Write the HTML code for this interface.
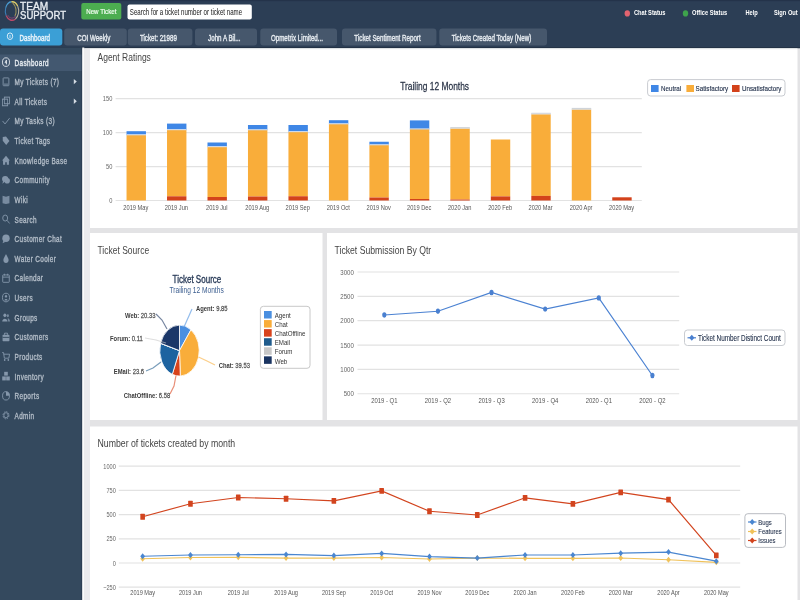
<!DOCTYPE html>
<html><head><meta charset="utf-8"><style>
*{margin:0;padding:0}
html,body{width:800px;height:600px;overflow:hidden;background:#e3e3e5}
svg{display:block;font-family:"Liberation Sans",sans-serif;filter:blur(0.3px)}
</style></head><body>
<svg width="800" height="600" viewBox="0 0 800 600">
<rect x="0.00" y="0.00" width="800.00" height="600.00" fill="#e3e3e5" rx="0"/>
<rect x="0.00" y="0.00" width="800.00" height="48.30" fill="#2c3e55" rx="0"/>
<line x1="0.00" y1="47.60" x2="800.00" y2="47.60" stroke="#233246" stroke-width="1.2"/>
<rect x="0.00" y="0.00" width="800.00" height="1.20" fill="#24334a" rx="0"/>
<g transform="translate(12,11) scale(0.72,1)">
<path d="M-8.05,4.65 A9.3,9.3 0 0 1 -8.74,-3.18" stroke="#3d7fb8" stroke-width="1.5" fill="none"/>
<path d="M-8.74,-3.18 A9.3,9.3 0 0 1 -0.81,-9.26" stroke="#4a9ad0" stroke-width="1.5" fill="none"/>
<path d="M-0.81,-9.26 A9.3,9.3 0 0 1 8.05,-4.65" stroke="#e0cf6a" stroke-width="1.5" fill="none"/>
<path d="M8.05,-4.65 A9.3,9.3 0 0 1 4.65,8.05" stroke="#b8b0a0" stroke-width="1.5" fill="none"/>
<path d="M4.65,8.05 A9.3,9.3 0 0 1 -8.05,4.65" stroke="#c04a6a" stroke-width="1.5" fill="none"/>
<path d="M1,-8 C6,-5 7,1 4,5" stroke="#d8c060" stroke-width="1.4" fill="none" opacity="0.7"/>
<path d="M-6,4 C-3,8 2,8 5,5" stroke="#9a4a80" stroke-width="1.2" fill="none" opacity="0.6"/>
</g>
<text transform="translate(20.00,9.60) scale(0.92,1)" font-size="11" fill="#e9eef3" font-weight="normal" text-anchor="start" stroke="#e9eef3" stroke-width="0.35">TEAM</text>
<text transform="translate(20.00,18.90) scale(0.87,1)" font-size="11" fill="#e9eef3" font-weight="normal" text-anchor="start" stroke="#e9eef3" stroke-width="0.35">SUPPORT</text>
<rect x="81.30" y="3.00" width="40.00" height="16.50" fill="#4cad50" rx="2"/>
<text transform="translate(101.30,13.80) scale(0.78,1)" font-size="7.9" fill="#f4fff4" font-weight="normal" text-anchor="middle" stroke="#f4fff4" stroke-width="0.2">New Ticket</text>
<rect x="127.50" y="4.50" width="124.30" height="15.00" fill="#ffffff" rx="2"/>
<text transform="translate(129.80,15.30) scale(0.715,1)" font-size="8.6" fill="#151515" font-weight="normal" text-anchor="start">Search for a ticket number or ticket name</text>
<ellipse cx="627.3" cy="13.4" rx="2.7" ry="3.1" fill="#e2636f"/>
<text transform="translate(633.90,15.20) scale(0.78,1)" font-size="7.3" fill="#ffffff" font-weight="bold" text-anchor="start">Chat Status</text>
<ellipse cx="685.5" cy="13.4" rx="2.7" ry="3.1" fill="#3ea34c"/>
<text transform="translate(692.00,15.20) scale(0.78,1)" font-size="7.3" fill="#ffffff" font-weight="bold" text-anchor="start">Office Status</text>
<text transform="translate(745.40,15.20) scale(0.78,1)" font-size="7.3" fill="#ffffff" font-weight="bold" text-anchor="start">Help</text>
<text transform="translate(774.00,15.20) scale(0.78,1)" font-size="7.3" fill="#ffffff" font-weight="bold" text-anchor="start">Sign Out</text>
<rect x="0.00" y="28.40" width="62.30" height="17.10" fill="#3b9fd6" rx="3"/>
<ellipse cx="10" cy="36.2" rx="2.7" ry="3.3" fill="none" stroke="#e8f3fb" stroke-width="0.9"/>
<path d="M10,35 L10,38" stroke="#e8f3fb" stroke-width="0.8"/>
<text transform="translate(19.60,40.70) scale(0.69,1)" font-size="9" fill="#eaf4fb" font-weight="normal" text-anchor="start" stroke="#eaf4fb" stroke-width="0.4">Dashboard</text>
<rect x="64.20" y="28.40" width="62.60" height="17.10" fill="#46576c" rx="3"/>
<text transform="translate(93.80,40.70) scale(0.69,1)" font-size="9" fill="#e6ebf0" font-weight="normal" text-anchor="middle" stroke="#e6ebf0" stroke-width="0.4">COI Weekly</text>
<rect x="127.80" y="28.40" width="64.60" height="17.10" fill="#46576c" rx="3"/>
<text transform="translate(158.40,40.70) scale(0.69,1)" font-size="9" fill="#e6ebf0" font-weight="normal" text-anchor="middle" stroke="#e6ebf0" stroke-width="0.4">Ticket: 21989</text>
<rect x="195.00" y="28.40" width="62.00" height="17.10" fill="#46576c" rx="3"/>
<text transform="translate(224.30,40.70) scale(0.69,1)" font-size="9" fill="#e6ebf0" font-weight="normal" text-anchor="middle" stroke="#e6ebf0" stroke-width="0.4">John A Bil...</text>
<rect x="260.30" y="28.40" width="76.70" height="17.10" fill="#46576c" rx="3"/>
<text transform="translate(296.95,40.70) scale(0.69,1)" font-size="9" fill="#e6ebf0" font-weight="normal" text-anchor="middle" stroke="#e6ebf0" stroke-width="0.4">Opmetrix Limited...</text>
<rect x="342.00" y="28.40" width="94.40" height="17.10" fill="#46576c" rx="3"/>
<text transform="translate(387.50,40.70) scale(0.69,1)" font-size="9" fill="#e6ebf0" font-weight="normal" text-anchor="middle" stroke="#e6ebf0" stroke-width="0.4">Ticket Sentiment Report</text>
<rect x="439.30" y="28.40" width="107.70" height="17.10" fill="#46576c" rx="3"/>
<text transform="translate(491.45,40.70) scale(0.69,1)" font-size="9" fill="#e6ebf0" font-weight="normal" text-anchor="middle" stroke="#e6ebf0" stroke-width="0.4">Tickets Created Today (New)</text>
<rect x="0.00" y="47.50" width="82.30" height="552.50" fill="#34495e" rx="0"/>
<line x1="81.80" y1="47.50" x2="81.80" y2="600.00" stroke="#2b3d50" stroke-width="1"/>
<rect x="82.30" y="47.50" width="2.00" height="552.50" fill="#fbfbfb" rx="0"/>
<rect x="84.30" y="48.30" width="5.70" height="551.70" fill="#ebebed" rx="0"/>
<rect x="0.00" y="54.50" width="81.50" height="16.50" fill="#435870" rx="0"/>
<text transform="translate(14.60,65.60) scale(0.78,1)" font-size="8.2" fill="#e8edf2" font-weight="normal" text-anchor="start" letter-spacing="0.45" stroke="#e8edf2" stroke-width="0.35">Dashboard</text>
<g transform="translate(1.9,57.10) scale(0.82,1.0)" fill="#dfe5eb" stroke="#dfe5eb">
<circle cx="5" cy="5" r="4.3" fill="none" stroke-width="1" stroke-width="1.1"/><path d="M5.6,2.8 L3.8,5.6 L6,5.6 M5.6,3 L5.6,7.3" fill="none" stroke-width="1" stroke-width="0.8"/>
</g>
<text transform="translate(14.60,85.22) scale(0.78,1)" font-size="8.2" fill="#b2bcc7" font-weight="normal" text-anchor="start" letter-spacing="0.45" stroke="#b2bcc7" stroke-width="0.35">My Tickets (7)</text>
<g transform="translate(1.9,76.72) scale(0.82,1.0)" fill="#8597ab" stroke="#8597ab">
<rect x="1.5" y="1.2" width="7" height="7.8" rx="0.6" fill="none" stroke-width="1"/><path d="M2.5,7.4 L7.5,7.4" fill="none" stroke-width="1" stroke-width="0.7"/>
</g>
<path d="M73.8,78.92 L76.8,81.62 L73.8,84.32 Z" fill="#d5dce4"/>
<text transform="translate(14.60,104.84) scale(0.78,1)" font-size="8.2" fill="#b2bcc7" font-weight="normal" text-anchor="start" letter-spacing="0.45" stroke="#b2bcc7" stroke-width="0.35">All Tickets</text>
<g transform="translate(1.9,96.34) scale(0.82,1.0)" fill="#8597ab" stroke="#8597ab">
<rect x="3" y="0.8" width="6.2" height="6.6" fill="none" stroke-width="1"/><rect x="0.8" y="2.8" width="6.2" height="6.6" fill="none" stroke-width="1"/>
</g>
<path d="M73.8,98.54 L76.8,101.24 L73.8,103.94 Z" fill="#d5dce4"/>
<text transform="translate(14.60,124.46) scale(0.78,1)" font-size="8.2" fill="#b2bcc7" font-weight="normal" text-anchor="start" letter-spacing="0.45" stroke="#b2bcc7" stroke-width="0.35">My Tasks (3)</text>
<g transform="translate(1.9,115.96) scale(0.82,1.0)" fill="#8597ab" stroke="#8597ab">
<path d="M0.8,5 L3.8,8 L9.4,2.2" fill="none" stroke-width="1" stroke-width="1.9"/>
</g>
<text transform="translate(14.60,144.08) scale(0.78,1)" font-size="8.2" fill="#b2bcc7" font-weight="normal" text-anchor="start" letter-spacing="0.45" stroke="#b2bcc7" stroke-width="0.35">Ticket Tags</text>
<g transform="translate(1.9,135.58) scale(0.82,1.0)" fill="#8597ab" stroke="#8597ab">
<path d="M1,1.5 L5,1 L9.2,5.4 L5.2,9.4 L1,5.2 Z" stroke="none"/>
</g>
<text transform="translate(14.60,163.70) scale(0.78,1)" font-size="8.2" fill="#b2bcc7" font-weight="normal" text-anchor="start" letter-spacing="0.45" stroke="#b2bcc7" stroke-width="0.35">Knowledge Base</text>
<g transform="translate(1.9,155.20) scale(0.82,1.0)" fill="#8597ab" stroke="#8597ab">
<path d="M5,0.5 L9.8,5.2 L8.6,5.2 L8.6,9.6 L6,9.6 L6,7 L4,7 L4,9.6 L1.4,9.6 L1.4,5.2 L0.2,5.2 Z" stroke="none"/>
</g>
<text transform="translate(14.60,183.32) scale(0.78,1)" font-size="8.2" fill="#b2bcc7" font-weight="normal" text-anchor="start" letter-spacing="0.45" stroke="#b2bcc7" stroke-width="0.35">Community</text>
<g transform="translate(1.9,174.82) scale(0.82,1.0)" fill="#8597ab" stroke="#8597ab">
<ellipse cx="4" cy="4.3" rx="3.8" ry="3" stroke="none"/><ellipse cx="6.4" cy="6" rx="3.4" ry="2.8" stroke="none"/><path d="M1.5,6 L0.6,9 L3.6,7" stroke="none"/>
</g>
<text transform="translate(14.60,202.94) scale(0.78,1)" font-size="8.2" fill="#b2bcc7" font-weight="normal" text-anchor="start" letter-spacing="0.45" stroke="#b2bcc7" stroke-width="0.35">Wiki</text>
<g transform="translate(1.9,194.44) scale(0.82,1.0)" fill="#8597ab" stroke="#8597ab">
<path d="M0.8,1.2 L5,2.2 L9.2,1.2 L9.2,8.8 L5,9.6 L0.8,8.8 Z" stroke="none" opacity="0.85"/>
</g>
<text transform="translate(14.60,222.56) scale(0.78,1)" font-size="8.2" fill="#b2bcc7" font-weight="normal" text-anchor="start" letter-spacing="0.45" stroke="#b2bcc7" stroke-width="0.35">Search</text>
<g transform="translate(1.9,214.06) scale(0.82,1.0)" fill="#8597ab" stroke="#8597ab">
<circle cx="4" cy="4" r="3" fill="none" stroke-width="1" stroke-width="1.1"/><path d="M6.2,6.2 L9.4,9.4" fill="none" stroke-width="1" stroke-width="1.4"/>
</g>
<text transform="translate(14.60,242.18) scale(0.78,1)" font-size="8.2" fill="#b2bcc7" font-weight="normal" text-anchor="start" letter-spacing="0.45" stroke="#b2bcc7" stroke-width="0.35">Customer Chat</text>
<g transform="translate(1.9,233.68) scale(0.82,1.0)" fill="#8597ab" stroke="#8597ab">
<ellipse cx="5" cy="4.6" rx="4.5" ry="3.8" stroke="none"/><path d="M1.8,7 L0.8,9.6 L4.5,8" stroke="none"/>
</g>
<text transform="translate(14.60,261.80) scale(0.78,1)" font-size="8.2" fill="#b2bcc7" font-weight="normal" text-anchor="start" letter-spacing="0.45" stroke="#b2bcc7" stroke-width="0.35">Water Cooler</text>
<g transform="translate(1.9,253.30) scale(0.82,1.0)" fill="#8597ab" stroke="#8597ab">
<path d="M5,0.6 C6.5,3.2 8.2,5 8.2,6.8 C8.2,8.6 6.8,9.8 5,9.8 C3.2,9.8 1.8,8.6 1.8,6.8 C1.8,5 3.5,3.2 5,0.6 Z" stroke="none"/>
</g>
<text transform="translate(14.60,281.42) scale(0.78,1)" font-size="8.2" fill="#b2bcc7" font-weight="normal" text-anchor="start" letter-spacing="0.45" stroke="#b2bcc7" stroke-width="0.35">Calendar</text>
<g transform="translate(1.9,272.92) scale(0.82,1.0)" fill="#8597ab" stroke="#8597ab">
<rect x="1" y="2" width="8" height="7.4" rx="0.6" fill="none" stroke-width="1"/><path d="M1,4.2 L9,4.2 M3,0.8 L3,2.6 M7,0.8 L7,2.6" fill="none" stroke-width="1" stroke-width="0.9"/>
</g>
<text transform="translate(14.60,301.04) scale(0.78,1)" font-size="8.2" fill="#b2bcc7" font-weight="normal" text-anchor="start" letter-spacing="0.45" stroke="#b2bcc7" stroke-width="0.35">Users</text>
<g transform="translate(1.9,292.54) scale(0.82,1.0)" fill="#8597ab" stroke="#8597ab">
<circle cx="5" cy="5" r="4.3" fill="none" stroke-width="1" stroke-width="1.1"/><circle cx="5" cy="3.8" r="1.3" stroke="none"/><path d="M2.8,8 C3,5.8 7,5.8 7.2,8 Z" stroke="none"/>
</g>
<text transform="translate(14.60,320.66) scale(0.78,1)" font-size="8.2" fill="#b2bcc7" font-weight="normal" text-anchor="start" letter-spacing="0.45" stroke="#b2bcc7" stroke-width="0.35">Groups</text>
<g transform="translate(1.9,312.16) scale(0.82,1.0)" fill="#8597ab" stroke="#8597ab">
<circle cx="3.6" cy="3.2" r="1.8" stroke="none"/><path d="M0.4,9.4 C0.6,5.8 6.6,5.8 6.8,9.4 Z" stroke="none"/><circle cx="7.2" cy="3.6" r="1.4" stroke="none" opacity="0.8"/><path d="M7,6 C8.6,6 9.8,7.4 9.8,9.4 L7.6,9.4" stroke="none" opacity="0.8"/>
</g>
<text transform="translate(14.60,340.28) scale(0.78,1)" font-size="8.2" fill="#b2bcc7" font-weight="normal" text-anchor="start" letter-spacing="0.45" stroke="#b2bcc7" stroke-width="0.35">Customers</text>
<g transform="translate(1.9,331.78) scale(0.82,1.0)" fill="#8597ab" stroke="#8597ab">
<rect x="0.8" y="3" width="8.4" height="6.4" rx="0.8" stroke="none"/><path d="M3.2,3 L3.2,1.4 L6.8,1.4 L6.8,3" fill="none" stroke-width="1" stroke-width="1"/><path d="M0.8,5.6 L9.2,5.6" fill="none" stroke-width="1" stroke="#34495e" stroke-width="0.6"/>
</g>
<text transform="translate(14.60,359.90) scale(0.78,1)" font-size="8.2" fill="#b2bcc7" font-weight="normal" text-anchor="start" letter-spacing="0.45" stroke="#b2bcc7" stroke-width="0.35">Products</text>
<g transform="translate(1.9,351.40) scale(0.82,1.0)" fill="#8597ab" stroke="#8597ab">
<path d="M0.3,1.2 L2,1.2 L3,6.8 L8.4,6.8 L9.4,2.8 L2.4,2.8" fill="none" stroke-width="1" stroke-width="1.1"/><circle cx="3.4" cy="8.6" r="1" stroke="none"/><circle cx="7.8" cy="8.6" r="1" stroke="none"/>
</g>
<text transform="translate(14.60,379.52) scale(0.78,1)" font-size="8.2" fill="#b2bcc7" font-weight="normal" text-anchor="start" letter-spacing="0.45" stroke="#b2bcc7" stroke-width="0.35">Inventory</text>
<g transform="translate(1.9,371.02) scale(0.82,1.0)" fill="#8597ab" stroke="#8597ab">
<rect x="2.8" y="0.8" width="4.4" height="3.8" stroke="none"/><rect x="0.4" y="5.4" width="4.4" height="4" stroke="none"/><rect x="5.2" y="5.4" width="4.4" height="4" stroke="none"/>
</g>
<text transform="translate(14.60,399.14) scale(0.78,1)" font-size="8.2" fill="#b2bcc7" font-weight="normal" text-anchor="start" letter-spacing="0.45" stroke="#b2bcc7" stroke-width="0.35">Reports</text>
<g transform="translate(1.9,390.64) scale(0.82,1.0)" fill="#8597ab" stroke="#8597ab">
<circle cx="5" cy="5.2" r="4.2" fill="none" stroke-width="1" stroke-width="1.1"/><path d="M5,5.2 L5,1 A4.2,4.2 0 0 1 9.2,5.2 Z" stroke="none"/>
</g>
<text transform="translate(14.60,418.76) scale(0.78,1)" font-size="8.2" fill="#b2bcc7" font-weight="normal" text-anchor="start" letter-spacing="0.45" stroke="#b2bcc7" stroke-width="0.35">Admin</text>
<g transform="translate(1.9,410.26) scale(0.82,1.0)" fill="#8597ab" stroke="#8597ab">
<circle cx="5" cy="5" r="3.6" fill="none" stroke-width="1" stroke-width="2.4" stroke-dasharray="1.7,1.1"/><circle cx="5" cy="5" r="2.6" fill="none" stroke-width="1" stroke-width="1.2"/>
</g>
<rect x="90.00" y="48.30" width="707.50" height="179.70" fill="#ffffff" rx="0"/>
<rect x="84.00" y="48.30" width="716.00" height="1.00" fill="#dfe4e8" rx="0" opacity="0.6"/>
<rect x="90.00" y="233.00" width="232.50" height="187.00" fill="#ffffff" rx="0"/>
<rect x="327.00" y="233.00" width="470.50" height="187.00" fill="#ffffff" rx="0"/>
<rect x="90.00" y="426.50" width="707.50" height="173.50" fill="#ffffff" rx="0"/>
<text transform="translate(97.50,60.50) scale(0.78,1)" font-size="10.9" fill="#454545" font-weight="normal" text-anchor="start">Agent Ratings</text>
<text transform="translate(97.50,253.50) scale(0.78,1)" font-size="10.9" fill="#454545" font-weight="normal" text-anchor="start">Ticket Source</text>
<text transform="translate(334.50,253.50) scale(0.78,1)" font-size="11.1" fill="#454545" font-weight="normal" text-anchor="start">Ticket Submission By Qtr</text>
<text transform="translate(97.50,446.50) scale(0.78,1)" font-size="11.2" fill="#454545" font-weight="normal" text-anchor="start">Number of tickets created by month</text>
<line x1="115.60" y1="200.50" x2="641.80" y2="200.50" stroke="#e2e2e2" stroke-width="1.2"/>
<text transform="translate(112.30,203.10) scale(0.78,1)" font-size="7.3" fill="#666666" font-weight="normal" text-anchor="end">0</text>
<line x1="115.60" y1="166.57" x2="641.80" y2="166.57" stroke="#e2e2e2" stroke-width="1.2"/>
<text transform="translate(112.30,169.17) scale(0.78,1)" font-size="7.3" fill="#666666" font-weight="normal" text-anchor="end">50</text>
<line x1="115.60" y1="132.63" x2="641.80" y2="132.63" stroke="#e2e2e2" stroke-width="1.2"/>
<text transform="translate(112.30,135.23) scale(0.78,1)" font-size="7.3" fill="#666666" font-weight="normal" text-anchor="end">100</text>
<line x1="115.60" y1="98.70" x2="641.80" y2="98.70" stroke="#e2e2e2" stroke-width="1.2"/>
<text transform="translate(112.30,101.30) scale(0.78,1)" font-size="7.3" fill="#666666" font-weight="normal" text-anchor="end">150</text>
<text transform="translate(434.60,89.50) scale(0.78,1)" font-size="10.8" fill="#2a3447" font-weight="normal" text-anchor="middle" stroke="#2a3447" stroke-width="0.25">Trailing 12 Months</text>
<rect x="647.60" y="79.60" width="137.40" height="16.40" fill="#ffffff" rx="3" stroke="#c9ccd1" stroke-width="1"/>
<rect x="651.00" y="85.00" width="7.60" height="7.00" fill="#3f87e6" rx="0"/>
<text transform="translate(661.00,91.00) scale(0.78,1)" font-size="8" fill="#26344e" font-weight="normal" text-anchor="start" stroke="#26344e" stroke-width="0.15">Neutral</text>
<rect x="686.40" y="85.00" width="7.60" height="7.00" fill="#f9ad3a" rx="0"/>
<text transform="translate(695.60,91.00) scale(0.78,1)" font-size="8" fill="#26344e" font-weight="normal" text-anchor="start" stroke="#26344e" stroke-width="0.15">Satisfactory</text>
<rect x="732.00" y="85.00" width="7.60" height="7.00" fill="#d3421b" rx="0"/>
<text transform="translate(742.00,91.00) scale(0.78,1)" font-size="8" fill="#26344e" font-weight="normal" text-anchor="start" stroke="#26344e" stroke-width="0.15">Unsatisfactory</text>
<rect x="126.54" y="131.20" width="19.40" height="4.10" fill="#3f87e6" rx="0"/>
<rect x="126.54" y="134.20" width="19.40" height="1.10" fill="#dfe3e8" rx="0"/>
<rect x="126.54" y="135.30" width="19.40" height="65.20" fill="#f9ad3a" rx="0"/>
<text transform="translate(135.84,210.30) scale(0.78,1)" font-size="7.3" fill="#555555" font-weight="normal" text-anchor="middle">2019 May</text>
<rect x="167.02" y="123.60" width="19.40" height="6.60" fill="#3f87e6" rx="0"/>
<rect x="167.02" y="129.10" width="19.40" height="1.10" fill="#dfe3e8" rx="0"/>
<rect x="167.02" y="130.20" width="19.40" height="66.10" fill="#f9ad3a" rx="0"/>
<rect x="167.02" y="196.30" width="19.40" height="4.20" fill="#d3421b" rx="0"/>
<text transform="translate(176.32,210.30) scale(0.78,1)" font-size="7.3" fill="#555555" font-weight="normal" text-anchor="middle">2019 Jun</text>
<rect x="207.49" y="142.50" width="19.40" height="4.70" fill="#3f87e6" rx="0"/>
<rect x="207.49" y="146.10" width="19.40" height="1.10" fill="#dfe3e8" rx="0"/>
<rect x="207.49" y="147.20" width="19.40" height="49.80" fill="#f9ad3a" rx="0"/>
<rect x="207.49" y="197.00" width="19.40" height="3.50" fill="#d3421b" rx="0"/>
<text transform="translate(216.79,210.30) scale(0.78,1)" font-size="7.3" fill="#555555" font-weight="normal" text-anchor="middle">2019 Jul</text>
<rect x="247.97" y="125.00" width="19.40" height="5.30" fill="#3f87e6" rx="0"/>
<rect x="247.97" y="129.20" width="19.40" height="1.10" fill="#dfe3e8" rx="0"/>
<rect x="247.97" y="130.30" width="19.40" height="66.20" fill="#f9ad3a" rx="0"/>
<rect x="247.97" y="196.50" width="19.40" height="4.00" fill="#d3421b" rx="0"/>
<text transform="translate(257.27,210.30) scale(0.78,1)" font-size="7.3" fill="#555555" font-weight="normal" text-anchor="middle">2019 Aug</text>
<rect x="288.45" y="125.00" width="19.40" height="7.20" fill="#3f87e6" rx="0"/>
<rect x="288.45" y="131.10" width="19.40" height="1.10" fill="#dfe3e8" rx="0"/>
<rect x="288.45" y="132.20" width="19.40" height="64.05" fill="#f9ad3a" rx="0"/>
<rect x="288.45" y="196.25" width="19.40" height="4.25" fill="#d3421b" rx="0"/>
<text transform="translate(297.75,210.30) scale(0.78,1)" font-size="7.3" fill="#555555" font-weight="normal" text-anchor="middle">2019 Sep</text>
<rect x="328.92" y="120.20" width="19.40" height="4.10" fill="#3f87e6" rx="0"/>
<rect x="328.92" y="123.20" width="19.40" height="1.10" fill="#dfe3e8" rx="0"/>
<rect x="328.92" y="124.30" width="19.40" height="76.20" fill="#f9ad3a" rx="0"/>
<text transform="translate(338.22,210.30) scale(0.78,1)" font-size="7.3" fill="#555555" font-weight="normal" text-anchor="middle">2019 Oct</text>
<rect x="369.40" y="141.75" width="19.40" height="3.55" fill="#3f87e6" rx="0"/>
<rect x="369.40" y="144.20" width="19.40" height="1.10" fill="#dfe3e8" rx="0"/>
<rect x="369.40" y="145.30" width="19.40" height="52.20" fill="#f9ad3a" rx="0"/>
<rect x="369.40" y="197.50" width="19.40" height="3.00" fill="#d3421b" rx="0"/>
<text transform="translate(378.70,210.30) scale(0.78,1)" font-size="7.3" fill="#555555" font-weight="normal" text-anchor="middle">2019 Nov</text>
<rect x="409.88" y="120.40" width="19.40" height="9.10" fill="#3f87e6" rx="0"/>
<rect x="409.88" y="128.40" width="19.40" height="1.10" fill="#dfe3e8" rx="0"/>
<rect x="409.88" y="129.50" width="19.40" height="69.50" fill="#f9ad3a" rx="0"/>
<rect x="409.88" y="199.00" width="19.40" height="1.50" fill="#d3421b" rx="0"/>
<text transform="translate(419.18,210.30) scale(0.78,1)" font-size="7.3" fill="#555555" font-weight="normal" text-anchor="middle">2019 Dec</text>
<rect x="450.35" y="127.10" width="19.40" height="1.70" fill="#c9cdd3" rx="0"/>
<rect x="450.35" y="127.70" width="19.40" height="1.10" fill="#dfe3e8" rx="0"/>
<rect x="450.35" y="128.80" width="19.40" height="70.70" fill="#f9ad3a" rx="0"/>
<rect x="450.35" y="199.50" width="19.40" height="1.00" fill="#d3421b" rx="0"/>
<text transform="translate(459.65,210.30) scale(0.78,1)" font-size="7.3" fill="#555555" font-weight="normal" text-anchor="middle">2020 Jan</text>
<rect x="490.83" y="139.50" width="19.40" height="56.90" fill="#f9ad3a" rx="0"/>
<rect x="490.83" y="196.40" width="19.40" height="4.10" fill="#d3421b" rx="0"/>
<text transform="translate(500.13,210.30) scale(0.78,1)" font-size="7.3" fill="#555555" font-weight="normal" text-anchor="middle">2020 Feb</text>
<rect x="531.31" y="112.80" width="19.40" height="1.70" fill="#c9cdd3" rx="0"/>
<rect x="531.31" y="113.40" width="19.40" height="1.10" fill="#dfe3e8" rx="0"/>
<rect x="531.31" y="114.50" width="19.40" height="81.40" fill="#f9ad3a" rx="0"/>
<rect x="531.31" y="195.90" width="19.40" height="4.60" fill="#d3421b" rx="0"/>
<text transform="translate(540.61,210.30) scale(0.78,1)" font-size="7.3" fill="#555555" font-weight="normal" text-anchor="middle">2020 Mar</text>
<rect x="571.78" y="107.90" width="19.40" height="1.90" fill="#c9cdd3" rx="0"/>
<rect x="571.78" y="108.70" width="19.40" height="1.10" fill="#dfe3e8" rx="0"/>
<rect x="571.78" y="109.80" width="19.40" height="90.70" fill="#f9ad3a" rx="0"/>
<text transform="translate(581.08,210.30) scale(0.78,1)" font-size="7.3" fill="#555555" font-weight="normal" text-anchor="middle">2020 Apr</text>
<rect x="612.26" y="197.30" width="19.40" height="3.20" fill="#d3421b" rx="0"/>
<text transform="translate(621.56,210.30) scale(0.78,1)" font-size="7.3" fill="#555555" font-weight="normal" text-anchor="middle">2020 May</text>
<text transform="translate(196.90,282.60) scale(0.78,1)" font-size="10.3" fill="#2b3d5a" font-weight="normal" text-anchor="middle" stroke="#2b3d5a" stroke-width="0.35">Ticket Source</text>
<text transform="translate(196.60,292.80) scale(0.78,1)" font-size="8.5" fill="#3d5f90" font-weight="normal" text-anchor="middle">Trailing 12 Months</text>
<path d="M179.5,350.6 L179.50,325.10 A19.7,25.5 0 0 1 190.93,329.83 Z" fill="#4a8fe0" stroke="#ffffff" stroke-width="0.8" stroke-linejoin="round"/>
<path d="M179.5,350.6 L190.93,329.83 A19.7,25.5 0 0 1 180.27,376.08 Z" fill="#f9ad3a" stroke="#ffffff" stroke-width="0.8" stroke-linejoin="round"/>
<path d="M179.5,350.6 L180.27,376.08 A19.7,25.5 0 0 1 172.29,374.33 Z" fill="#d8431c" stroke="#ffffff" stroke-width="0.8" stroke-linejoin="round"/>
<path d="M179.5,350.6 L172.29,374.33 A19.7,25.5 0 0 1 160.60,343.39 Z" fill="#1d63a0" stroke="#ffffff" stroke-width="0.8" stroke-linejoin="round"/>
<path d="M179.5,350.6 L160.60,343.39 A19.7,25.5 0 0 1 160.64,343.22 Z" fill="#c8c8c8" stroke="#ffffff" stroke-width="0.8" stroke-linejoin="round"/>
<path d="M179.5,350.6 L160.64,343.22 A19.7,25.5 0 0 1 179.50,325.10 Z" fill="#1b3768" stroke="#ffffff" stroke-width="0.8" stroke-linejoin="round"/>
<path d="M184,327 L188,318 L192,309" fill="none" stroke="#4a8fe0" stroke-width="1.2" opacity="0.6"/>
<text transform="translate(196,311) scale(0.78,1)" font-size="7.5"><tspan fill="#3a3a3a" font-weight="bold">Agent: </tspan><tspan fill="#555" stroke="#555" stroke-width="0.25">9.85</tspan></text>
<path d="M198.5,357 L207,361 L215,365" fill="none" stroke="#f9ad3a" stroke-width="1.2" opacity="0.6"/>
<text transform="translate(218.8,367.6) scale(0.78,1)" font-size="7.5"><tspan fill="#3a3a3a" font-weight="bold">Chat: </tspan><tspan fill="#555" stroke="#555" stroke-width="0.25">39.53</tspan></text>
<path d="M176,375.5 L174,386 L170,394" fill="none" stroke="#d8431c" stroke-width="1.2" opacity="0.6"/>
<text transform="translate(123.8,398) scale(0.78,1)" font-size="7.5"><tspan fill="#3a3a3a" font-weight="bold">ChatOffline: </tspan><tspan fill="#555" stroke="#555" stroke-width="0.25">6.58</tspan></text>
<path d="M161,362 L153,368 L146,371" fill="none" stroke="#1f5b8c" stroke-width="1.2" opacity="0.6"/>
<text transform="translate(113.8,373.8) scale(0.78,1)" font-size="7.5"><tspan fill="#3a3a3a" font-weight="bold">EMail: </tspan><tspan fill="#555" stroke="#555" stroke-width="0.25">23.6</tspan></text>
<path d="M166,343 L156,340 L145,338" fill="none" stroke="#c8c8c8" stroke-width="1.2" opacity="0.6"/>
<text transform="translate(110,341.3) scale(0.78,1)" font-size="7.5"><tspan fill="#3a3a3a" font-weight="bold">Forum: </tspan><tspan fill="#555" stroke="#555" stroke-width="0.25">0.11</tspan></text>
<path d="M167,329 L162,320 L156,314" fill="none" stroke="#1a3461" stroke-width="1.2" opacity="0.6"/>
<text transform="translate(125,318.3) scale(0.78,1)" font-size="7.5"><tspan fill="#3a3a3a" font-weight="bold">Web: </tspan><tspan fill="#555" stroke="#555" stroke-width="0.25">20.33</tspan></text>
<rect x="260.40" y="306.30" width="49.60" height="62.00" fill="#ffffff" rx="3" stroke="#c8c8c8" stroke-width="1"/>
<rect x="264.00" y="311.00" width="7.70" height="7.50" fill="#4a8fe0" rx="0"/>
<text transform="translate(274.70,318.20) scale(0.78,1)" font-size="7.9" fill="#333" font-weight="normal" text-anchor="start">Agent</text>
<rect x="264.00" y="320.07" width="7.70" height="7.50" fill="#f9ad3a" rx="0"/>
<text transform="translate(274.70,327.27) scale(0.78,1)" font-size="7.9" fill="#333" font-weight="normal" text-anchor="start">Chat</text>
<rect x="264.00" y="329.14" width="7.70" height="7.50" fill="#d8431c" rx="0"/>
<text transform="translate(274.70,336.34) scale(0.78,1)" font-size="7.9" fill="#333" font-weight="normal" text-anchor="start">ChatOffline</text>
<rect x="264.00" y="338.21" width="7.70" height="7.50" fill="#1f5b8c" rx="0"/>
<text transform="translate(274.70,345.41) scale(0.78,1)" font-size="7.9" fill="#333" font-weight="normal" text-anchor="start">EMail</text>
<rect x="264.00" y="347.28" width="7.70" height="7.50" fill="#c8c8c8" rx="0"/>
<text transform="translate(274.70,354.48) scale(0.78,1)" font-size="7.9" fill="#333" font-weight="normal" text-anchor="start">Forum</text>
<rect x="264.00" y="356.35" width="7.70" height="7.50" fill="#1a3461" rx="0"/>
<text transform="translate(274.70,363.55) scale(0.78,1)" font-size="7.9" fill="#333" font-weight="normal" text-anchor="start">Web</text>
<line x1="357.50" y1="393.75" x2="679.20" y2="393.75" stroke="#e2e2e2" stroke-width="1.2"/>
<text transform="translate(353.80,396.45) scale(0.78,1)" font-size="7.8" fill="#666666" font-weight="normal" text-anchor="end">500</text>
<line x1="357.50" y1="369.40" x2="679.20" y2="369.40" stroke="#e2e2e2" stroke-width="1.2"/>
<text transform="translate(353.80,372.10) scale(0.78,1)" font-size="7.8" fill="#666666" font-weight="normal" text-anchor="end">1000</text>
<line x1="357.50" y1="345.05" x2="679.20" y2="345.05" stroke="#e2e2e2" stroke-width="1.2"/>
<text transform="translate(353.80,347.75) scale(0.78,1)" font-size="7.8" fill="#666666" font-weight="normal" text-anchor="end">1500</text>
<line x1="357.50" y1="320.70" x2="679.20" y2="320.70" stroke="#e2e2e2" stroke-width="1.2"/>
<text transform="translate(353.80,323.40) scale(0.78,1)" font-size="7.8" fill="#666666" font-weight="normal" text-anchor="end">2000</text>
<line x1="357.50" y1="296.35" x2="679.20" y2="296.35" stroke="#e2e2e2" stroke-width="1.2"/>
<text transform="translate(353.80,299.05) scale(0.78,1)" font-size="7.8" fill="#666666" font-weight="normal" text-anchor="end">2500</text>
<line x1="357.50" y1="272.00" x2="679.20" y2="272.00" stroke="#e2e2e2" stroke-width="1.2"/>
<text transform="translate(353.80,274.70) scale(0.78,1)" font-size="7.8" fill="#666666" font-weight="normal" text-anchor="end">3000</text>
<text transform="translate(384.31,402.50) scale(0.78,1)" font-size="7.6" fill="#555555" font-weight="normal" text-anchor="middle">2019 - Q1</text>
<text transform="translate(437.93,402.50) scale(0.78,1)" font-size="7.6" fill="#555555" font-weight="normal" text-anchor="middle">2019 - Q2</text>
<text transform="translate(491.54,402.50) scale(0.78,1)" font-size="7.6" fill="#555555" font-weight="normal" text-anchor="middle">2019 - Q3</text>
<text transform="translate(545.16,402.50) scale(0.78,1)" font-size="7.6" fill="#555555" font-weight="normal" text-anchor="middle">2019 - Q4</text>
<text transform="translate(598.78,402.50) scale(0.78,1)" font-size="7.6" fill="#555555" font-weight="normal" text-anchor="middle">2020 - Q1</text>
<text transform="translate(652.39,402.50) scale(0.78,1)" font-size="7.6" fill="#555555" font-weight="normal" text-anchor="middle">2020 - Q2</text>
<path d="M384.31,315.00 L437.93,311.25 L491.54,292.50 L545.16,309.11 L598.78,297.91 L652.39,375.49" fill="none" stroke="#4b82d2" stroke-width="1.2"/>
<ellipse cx="384.31" cy="315.00" rx="2.1" ry="2.7" fill="#4a80d0"/>
<ellipse cx="437.93" cy="311.25" rx="2.1" ry="2.7" fill="#4a80d0"/>
<ellipse cx="491.54" cy="292.50" rx="2.1" ry="2.7" fill="#4a80d0"/>
<ellipse cx="545.16" cy="309.11" rx="2.1" ry="2.7" fill="#4a80d0"/>
<ellipse cx="598.78" cy="297.91" rx="2.1" ry="2.7" fill="#4a80d0"/>
<ellipse cx="652.39" cy="375.49" rx="2.1" ry="2.7" fill="#4a80d0"/>
<rect x="684.50" y="330.00" width="100.50" height="15.50" fill="#ffffff" rx="3" stroke="#c9ccd1" stroke-width="1"/>
<line x1="687.50" y1="337.80" x2="696.00" y2="337.80" stroke="#4a80d0" stroke-width="1.2"/>
<path d="M691.8,334.8 L694.4,337.8 L691.8,340.8 L689.2,337.8 Z" fill="#4a80d0"/>
<text transform="translate(698.00,340.60) scale(0.78,1)" font-size="8.2" fill="#26344e" font-weight="normal" text-anchor="start" stroke="#26344e" stroke-width="0.1">Ticket Number Distinct Count</text>
<line x1="118.75" y1="587.20" x2="740.20" y2="587.20" stroke="#e2e2e2" stroke-width="1.2"/>
<text transform="translate(115.80,589.80) scale(0.78,1)" font-size="7.2" fill="#666666" font-weight="normal" text-anchor="end">−250</text>
<line x1="118.75" y1="563.00" x2="740.20" y2="563.00" stroke="#e2e2e2" stroke-width="1.2"/>
<text transform="translate(115.80,565.60) scale(0.78,1)" font-size="7.2" fill="#666666" font-weight="normal" text-anchor="end">0</text>
<line x1="118.75" y1="538.80" x2="740.20" y2="538.80" stroke="#e2e2e2" stroke-width="1.2"/>
<text transform="translate(115.80,541.40) scale(0.78,1)" font-size="7.2" fill="#666666" font-weight="normal" text-anchor="end">250</text>
<line x1="118.75" y1="514.60" x2="740.20" y2="514.60" stroke="#e2e2e2" stroke-width="1.2"/>
<text transform="translate(115.80,517.20) scale(0.78,1)" font-size="7.2" fill="#666666" font-weight="normal" text-anchor="end">500</text>
<line x1="118.75" y1="490.40" x2="740.20" y2="490.40" stroke="#e2e2e2" stroke-width="1.2"/>
<text transform="translate(115.80,493.00) scale(0.78,1)" font-size="7.2" fill="#666666" font-weight="normal" text-anchor="end">750</text>
<line x1="118.75" y1="466.20" x2="740.20" y2="466.20" stroke="#e2e2e2" stroke-width="1.2"/>
<text transform="translate(115.80,468.80) scale(0.78,1)" font-size="7.2" fill="#666666" font-weight="normal" text-anchor="end">1000</text>
<path d="M142.65,558.75 L190.46,557.50 L238.26,557.30 L286.06,558.10 L333.87,558.10 L381.67,557.50 L429.48,559.00 L477.28,558.10 L525.08,558.30 L572.89,558.30 L620.69,558.00 L668.49,559.75 L716.30,562.30" fill="none" stroke="#f0c25a" stroke-width="1.2"/>
<path d="M142.65,555.75 L145.05,558.75 L142.65,561.75 L140.25,558.75 Z" fill="#f0c25a"/>
<path d="M190.46,554.50 L192.86,557.50 L190.46,560.50 L188.06,557.50 Z" fill="#f0c25a"/>
<path d="M238.26,554.30 L240.66,557.30 L238.26,560.30 L235.86,557.30 Z" fill="#f0c25a"/>
<path d="M286.06,555.10 L288.46,558.10 L286.06,561.10 L283.66,558.10 Z" fill="#f0c25a"/>
<path d="M333.87,555.10 L336.27,558.10 L333.87,561.10 L331.47,558.10 Z" fill="#f0c25a"/>
<path d="M381.67,554.50 L384.07,557.50 L381.67,560.50 L379.27,557.50 Z" fill="#f0c25a"/>
<path d="M429.48,556.00 L431.88,559.00 L429.48,562.00 L427.08,559.00 Z" fill="#f0c25a"/>
<path d="M477.28,555.10 L479.68,558.10 L477.28,561.10 L474.88,558.10 Z" fill="#f0c25a"/>
<path d="M525.08,555.30 L527.48,558.30 L525.08,561.30 L522.68,558.30 Z" fill="#f0c25a"/>
<path d="M572.89,555.30 L575.29,558.30 L572.89,561.30 L570.49,558.30 Z" fill="#f0c25a"/>
<path d="M620.69,555.00 L623.09,558.00 L620.69,561.00 L618.29,558.00 Z" fill="#f0c25a"/>
<path d="M668.49,556.75 L670.89,559.75 L668.49,562.75 L666.09,559.75 Z" fill="#f0c25a"/>
<path d="M716.30,559.30 L718.70,562.30 L716.30,565.30 L713.90,562.30 Z" fill="#f0c25a"/>
<path d="M142.65,556.25 L190.46,555.00 L238.26,554.75 L286.06,554.40 L333.87,555.60 L381.67,553.40 L429.48,556.60 L477.28,558.10 L525.08,555.00 L572.89,555.00 L620.69,553.20 L668.49,552.10 L716.30,561.20" fill="none" stroke="#4a86d0" stroke-width="1.2"/>
<path d="M142.65,553.25 L145.05,556.25 L142.65,559.25 L140.25,556.25 Z" fill="#4a86d0"/>
<path d="M190.46,552.00 L192.86,555.00 L190.46,558.00 L188.06,555.00 Z" fill="#4a86d0"/>
<path d="M238.26,551.75 L240.66,554.75 L238.26,557.75 L235.86,554.75 Z" fill="#4a86d0"/>
<path d="M286.06,551.40 L288.46,554.40 L286.06,557.40 L283.66,554.40 Z" fill="#4a86d0"/>
<path d="M333.87,552.60 L336.27,555.60 L333.87,558.60 L331.47,555.60 Z" fill="#4a86d0"/>
<path d="M381.67,550.40 L384.07,553.40 L381.67,556.40 L379.27,553.40 Z" fill="#4a86d0"/>
<path d="M429.48,553.60 L431.88,556.60 L429.48,559.60 L427.08,556.60 Z" fill="#4a86d0"/>
<path d="M477.28,555.10 L479.68,558.10 L477.28,561.10 L474.88,558.10 Z" fill="#4a86d0"/>
<path d="M525.08,552.00 L527.48,555.00 L525.08,558.00 L522.68,555.00 Z" fill="#4a86d0"/>
<path d="M572.89,552.00 L575.29,555.00 L572.89,558.00 L570.49,555.00 Z" fill="#4a86d0"/>
<path d="M620.69,550.20 L623.09,553.20 L620.69,556.20 L618.29,553.20 Z" fill="#4a86d0"/>
<path d="M668.49,549.10 L670.89,552.10 L668.49,555.10 L666.09,552.10 Z" fill="#4a86d0"/>
<path d="M716.30,558.20 L718.70,561.20 L716.30,564.20 L713.90,561.20 Z" fill="#4a86d0"/>
<path d="M142.65,516.75 L190.46,503.75 L238.26,497.50 L286.06,498.75 L333.87,500.90 L381.67,490.90 L429.48,511.25 L477.28,515.00 L525.08,497.80 L572.89,503.90 L620.69,492.30 L668.49,499.60 L716.30,555.40" fill="none" stroke="#d2441e" stroke-width="1.2"/>
<rect x="140.35" y="513.85" width="4.60" height="5.80" fill="#d2441e" rx="0.5"/>
<rect x="188.16" y="500.85" width="4.60" height="5.80" fill="#d2441e" rx="0.5"/>
<rect x="235.96" y="494.60" width="4.60" height="5.80" fill="#d2441e" rx="0.5"/>
<rect x="283.76" y="495.85" width="4.60" height="5.80" fill="#d2441e" rx="0.5"/>
<rect x="331.57" y="498.00" width="4.60" height="5.80" fill="#d2441e" rx="0.5"/>
<rect x="379.37" y="488.00" width="4.60" height="5.80" fill="#d2441e" rx="0.5"/>
<rect x="427.18" y="508.35" width="4.60" height="5.80" fill="#d2441e" rx="0.5"/>
<rect x="474.98" y="512.10" width="4.60" height="5.80" fill="#d2441e" rx="0.5"/>
<rect x="522.78" y="494.90" width="4.60" height="5.80" fill="#d2441e" rx="0.5"/>
<rect x="570.59" y="501.00" width="4.60" height="5.80" fill="#d2441e" rx="0.5"/>
<rect x="618.39" y="489.40" width="4.60" height="5.80" fill="#d2441e" rx="0.5"/>
<rect x="666.19" y="496.70" width="4.60" height="5.80" fill="#d2441e" rx="0.5"/>
<rect x="714.00" y="552.50" width="4.60" height="5.80" fill="#d2441e" rx="0.5"/>
<text transform="translate(142.65,595.20) scale(0.78,1)" font-size="7.2" fill="#555555" font-weight="normal" text-anchor="middle">2019 May</text>
<text transform="translate(190.46,595.20) scale(0.78,1)" font-size="7.2" fill="#555555" font-weight="normal" text-anchor="middle">2019 Jun</text>
<text transform="translate(238.26,595.20) scale(0.78,1)" font-size="7.2" fill="#555555" font-weight="normal" text-anchor="middle">2019 Jul</text>
<text transform="translate(286.06,595.20) scale(0.78,1)" font-size="7.2" fill="#555555" font-weight="normal" text-anchor="middle">2019 Aug</text>
<text transform="translate(333.87,595.20) scale(0.78,1)" font-size="7.2" fill="#555555" font-weight="normal" text-anchor="middle">2019 Sep</text>
<text transform="translate(381.67,595.20) scale(0.78,1)" font-size="7.2" fill="#555555" font-weight="normal" text-anchor="middle">2019 Oct</text>
<text transform="translate(429.48,595.20) scale(0.78,1)" font-size="7.2" fill="#555555" font-weight="normal" text-anchor="middle">2019 Nov</text>
<text transform="translate(477.28,595.20) scale(0.78,1)" font-size="7.2" fill="#555555" font-weight="normal" text-anchor="middle">2019 Dec</text>
<text transform="translate(525.08,595.20) scale(0.78,1)" font-size="7.2" fill="#555555" font-weight="normal" text-anchor="middle">2020 Jan</text>
<text transform="translate(572.89,595.20) scale(0.78,1)" font-size="7.2" fill="#555555" font-weight="normal" text-anchor="middle">2020 Feb</text>
<text transform="translate(620.69,595.20) scale(0.78,1)" font-size="7.2" fill="#555555" font-weight="normal" text-anchor="middle">2020 Mar</text>
<text transform="translate(668.49,595.20) scale(0.78,1)" font-size="7.2" fill="#555555" font-weight="normal" text-anchor="middle">2020 Apr</text>
<text transform="translate(716.30,595.20) scale(0.78,1)" font-size="7.2" fill="#555555" font-weight="normal" text-anchor="middle">2020 May</text>
<rect x="744.90" y="513.70" width="40.60" height="33.70" fill="#ffffff" rx="3" stroke="#b9bcc2" stroke-width="1"/>
<line x1="748.00" y1="522.00" x2="756.50" y2="522.00" stroke="#4a86d0" stroke-width="1.2"/>
<path d="M752.2,519 L754.8,522 L752.2,525 L749.6,522 Z" fill="#4a86d0"/>
<text transform="translate(758.30,524.60) scale(0.78,1)" font-size="7.6" fill="#26344e" font-weight="normal" text-anchor="start" stroke="#26344e" stroke-width="0.1">Bugs</text>
<line x1="748.00" y1="531.50" x2="756.50" y2="531.50" stroke="#f0c25a" stroke-width="1.2"/>
<path d="M752.2,528.5 L754.8,531.5 L752.2,534.5 L749.6,531.5 Z" fill="#f0c25a"/>
<text transform="translate(758.30,534.10) scale(0.78,1)" font-size="7.6" fill="#26344e" font-weight="normal" text-anchor="start" stroke="#26344e" stroke-width="0.1">Features</text>
<line x1="748.00" y1="540.50" x2="756.50" y2="540.50" stroke="#d2441e" stroke-width="1.2"/>
<path d="M752.2,537.5 L754.8,540.5 L752.2,543.5 L749.6,540.5 Z" fill="#d2441e"/>
<text transform="translate(758.30,543.10) scale(0.78,1)" font-size="7.6" fill="#26344e" font-weight="normal" text-anchor="start" stroke="#26344e" stroke-width="0.1">Issues</text>
</svg></body></html>
